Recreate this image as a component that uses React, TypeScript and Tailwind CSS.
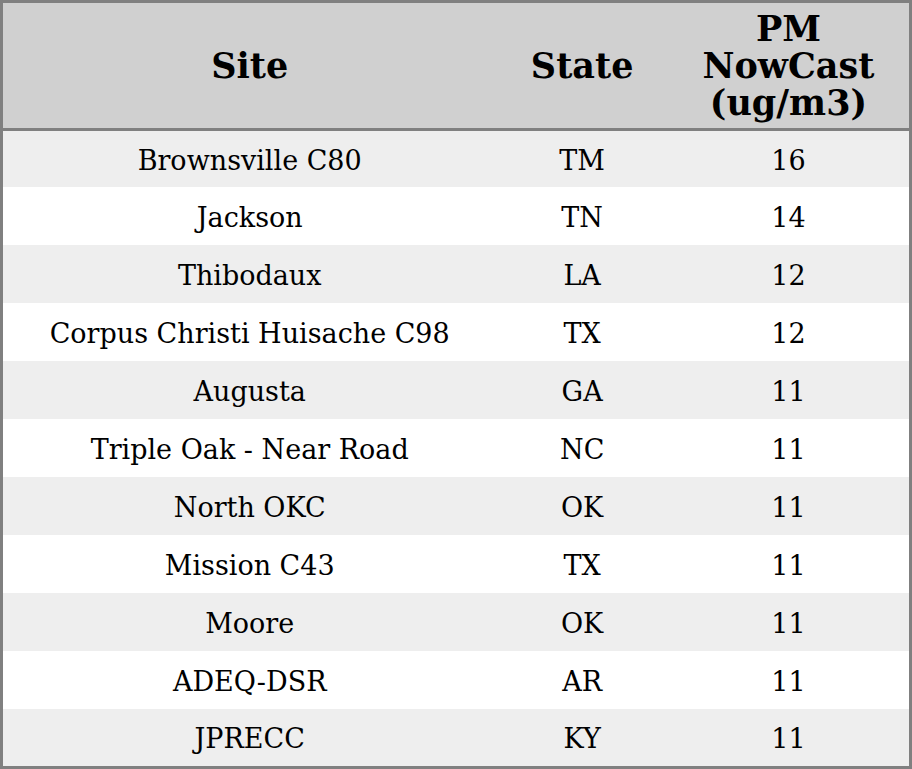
const rows: [string, string, number][] = [
  ["Brownsville C80", "TM", 16],
  ["Jackson", "TN", 14],
  ["Thibodaux", "LA", 12],
  ["Corpus Christi Huisache C98", "TX", 12],
  ["Augusta", "GA", 11],
  ["Triple Oak - Near Road", "NC", 11],
  ["North OKC", "OK", 11],
  ["Mission C43", "TX", 11],
  ["Moore", "OK", 11],
  ["ADEQ-DSR", "AR", 11],
  ["JPRECC", "KY", 11],
];

export default function App() {
  return (
    <div className="h-[769px] w-[912px] bg-white" style={{ fontFamily: '"DejaVu Serif", serif' }}>
      <table className="w-[912px] border-collapse border-[3px] border-[#808080] text-center text-black">
        <colgroup>
          <col className="w-[497px]" />
          <col className="w-[172px]" />
          <col className="w-[243px]" />
        </colgroup>
        <thead>
          <tr className="h-[128px] border-b-[3px] border-[#808080] bg-[#d0d0d0] text-[35px] font-bold leading-[37px]">
            <th className="p-0">Site</th>
            <th className="p-0">State</th>
            <th className="p-0">
              PM
              <br />
              NowCast
              <br />
              (ug/m3)
            </th>
          </tr>
        </thead>
        <tbody className="text-[27px] leading-[32px]">
          {rows.map(([site, state, value], i) => (
            <tr
              key={site}
              className={`${i === 0 ? "h-[57px]" : i === rows.length - 1 ? "h-[59px]" : "h-[58px]"} ${
                i % 2 === 0 ? "bg-[#eeeeee]" : "bg-white"
              }`}
            >
              <td className="p-0 pt-[4px]">{site}</td>
              <td className="p-0 pt-[4px]">{state}</td>
              <td className="p-0 pt-[4px]">{value}</td>
            </tr>
          ))}
        </tbody>
      </table>
    </div>
  );
}
